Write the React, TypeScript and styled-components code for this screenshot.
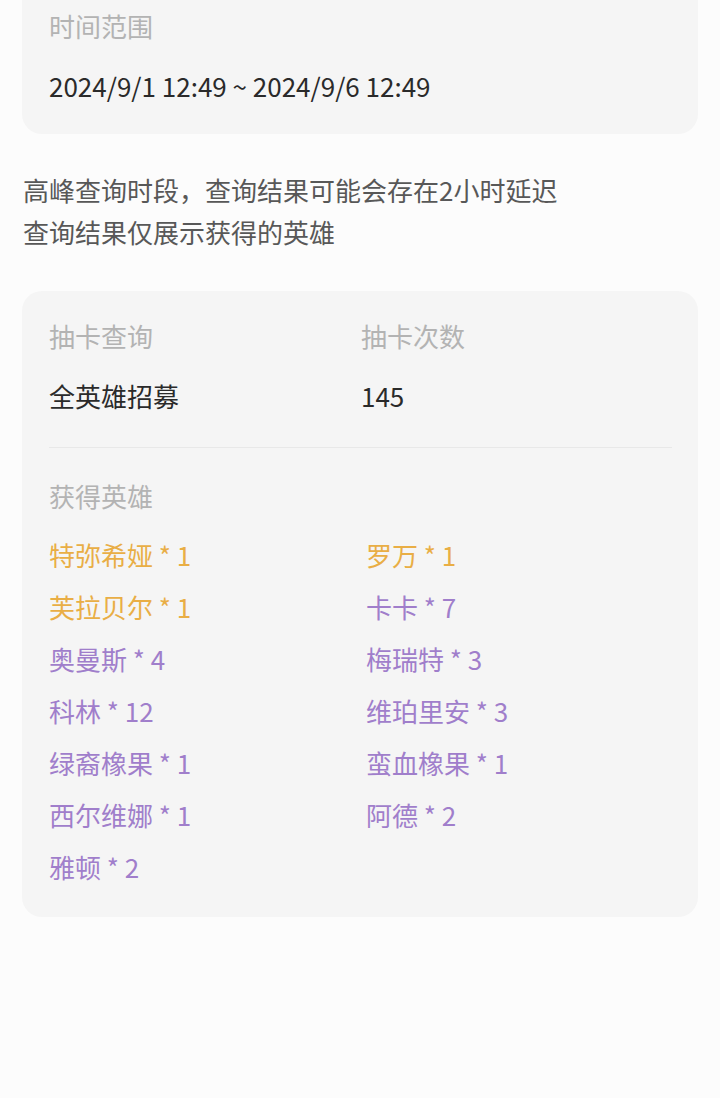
import React from 'react';
import styled, { createGlobalStyle } from 'styled-components';

const GlobalStyle = createGlobalStyle`
  html, body {
    margin: 0;
    padding: 0;
    background: #fcfcfc;
    font-family: 'Noto Sans CJK SC', 'Noto Sans', sans-serif;
  }
`;

const Page = styled.div`
  width: 720px;
  min-height: 1098px;
  padding: 0 22px;
  box-sizing: border-box;
  background: #fcfcfc;
`;

const Card = styled.div<{ $cut?: boolean }>`
  background: #f5f5f5;
  border-radius: ${p => (p.$cut ? '0 0 20px 20px' : '20px')};
  padding: ${p => (p.$cut ? '8px 26px 30px 27px' : '27px 26px 32px 27px')};
`;

const Label = styled.div`
  font-size: 26px;
  line-height: 36px;
  color: #b3b3b3;
`;

const Value = styled.div`
  font-size: 26px;
  line-height: 36px;
  color: #2a2a2a;
  margin-top: 24px;
`;

const Notice = styled.div`
  margin: 35px 0 38px;
  padding-left: 1px;
  font-size: 26px;
  line-height: 42px;
  color: #585858;
`;

const InfoGrid = styled.div`
  display: grid;
  grid-template-columns: 312px 1fr;
`;

const Divider = styled.div`
  height: 1px;
  background: #e8e8e8;
  margin: 33px 0 30px;
`;

const HeroGrid = styled.div`
  display: grid;
  grid-template-columns: 317px 1fr;
  row-gap: 16px;
  margin-top: 23px;
`;

const Hero = styled.div<{ $gold?: boolean }>`
  font-size: 26px;
  line-height: 36px;
  color: ${p => (p.$gold ? '#e9ae45' : '#a07ecb')};
`;

const heroes = [
  { name: '特弥希娅', n: 1, gold: true },
  { name: '罗万', n: 1, gold: true },
  { name: '芙拉贝尔', n: 1, gold: true },
  { name: '卡卡', n: 7 },
  { name: '奥曼斯', n: 4 },
  { name: '梅瑞特', n: 3 },
  { name: '科林', n: 12 },
  { name: '维珀里安', n: 3 },
  { name: '绿裔橡果', n: 1 },
  { name: '蛮血橡果', n: 1 },
  { name: '西尔维娜', n: 1 },
  { name: '阿德', n: 2 },
  { name: '雅顿', n: 2 },
];

export default function App() {
  return (
    <>
      <GlobalStyle />
      <Page>
        <Card $cut>
          <Label>时间范围</Label>
          <Value>2024/9/1 12:49 ~ 2024/9/6 12:49</Value>
        </Card>

        <Notice>
          高峰查询时段，查询结果可能会存在2小时延迟
          <br />
          查询结果仅展示获得的英雄
        </Notice>

        <Card>
          <InfoGrid>
            <Label>抽卡查询</Label>
            <Label>抽卡次数</Label>
            <Value>全英雄招募</Value>
            <Value>145</Value>
          </InfoGrid>
          <Divider />
          <Label>获得英雄</Label>
          <HeroGrid>
            {heroes.map(h => (
              <Hero key={h.name} $gold={h.gold}>
                {h.name} * {h.n}
              </Hero>
            ))}
          </HeroGrid>
        </Card>
      </Page>
    </>
  );
}
